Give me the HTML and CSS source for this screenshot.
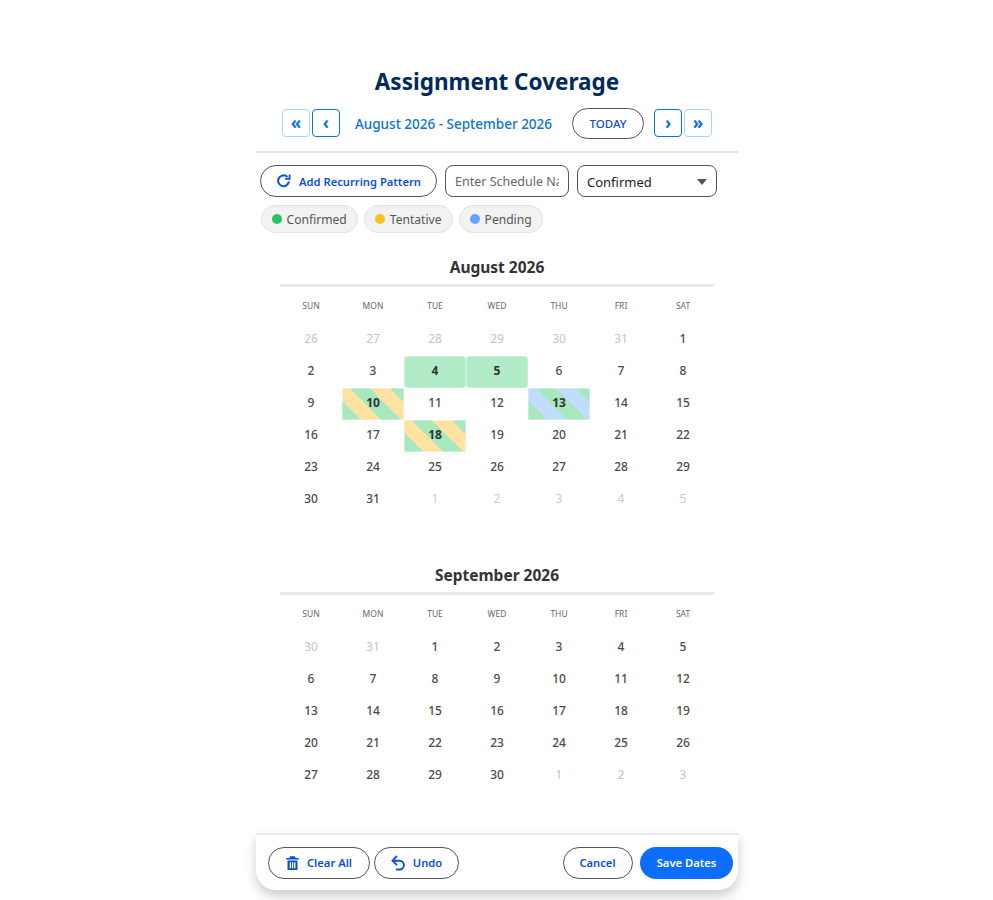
FILE: index.html
```html
<!DOCTYPE html>
<html lang="en">
<head>
<meta charset="utf-8">
<title>Assignment Coverage</title>
<link rel="stylesheet" href="styles.css">
</head>
<body>
<div class="panel">
  <h1 class="title">Assignment Coverage</h1>
  <div class="nav">
    <button class="nav-btn faded">«</button>
    <button class="nav-btn">‹</button>
    <span class="range">August 2026 - September 2026</span>
    <button class="today">TODAY</button>
    <button class="nav-btn">›</button>
    <button class="nav-btn faded">»</button>
  </div>
  <div class="controls">
    <button class="pill recurring">
      <svg class="icon" viewBox="0 0 14 14"><path d="M11.900 7.400A5.400 5.400 0 1 1 10.400 3" fill="none" stroke="currentColor" stroke-width="2"/><path d="M12.600 .5v4.400H8.200" fill="none" stroke="currentColor" stroke-width="1.800"/></svg>
      Add Recurring Pattern
    </button>
    <input class="name-input" type="text" placeholder="Enter Schedule Name">
    <div class="select"><span>Confirmed</span><i class="caret"></i></div>
  </div>
  <div class="legend">
    <span class="chip"><i class="dot green"></i>Confirmed</span>
    <span class="chip"><i class="dot amber"></i>Tentative</span>
    <span class="chip"><i class="dot blue"></i>Pending</span>
  </div>

  <section class="month">
    <h2 class="month-title">August 2026</h2>
    <div class="grid">
      <div class="wd">SUN</div><div class="wd">MON</div><div class="wd">TUE</div><div class="wd">WED</div><div class="wd">THU</div><div class="wd">FRI</div><div class="wd">SAT</div>
      <div class="d off">26</div><div class="d off">27</div><div class="d off">28</div><div class="d off">29</div><div class="d off">30</div><div class="d off">31</div><div class="d">1</div>
      <div class="d">2</div><div class="d">3</div><div class="d sel">4</div><div class="d sel">5</div><div class="d">6</div><div class="d">7</div><div class="d">8</div>
      <div class="d">9</div><div class="d mark tent">10</div><div class="d">11</div><div class="d">12</div><div class="d mark pend">13</div><div class="d">14</div><div class="d">15</div>
      <div class="d">16</div><div class="d">17</div><div class="d mark tent">18</div><div class="d">19</div><div class="d">20</div><div class="d">21</div><div class="d">22</div>
      <div class="d">23</div><div class="d">24</div><div class="d">25</div><div class="d">26</div><div class="d">27</div><div class="d">28</div><div class="d">29</div>
      <div class="d">30</div><div class="d">31</div><div class="d off blueish">1</div><div class="d off blueish">2</div><div class="d off blueish">3</div><div class="d off blueish">4</div><div class="d off blueish">5</div>
    </div>
  </section>

  <section class="month second">
    <h2 class="month-title">September 2026</h2>
    <div class="grid">
      <div class="wd">SUN</div><div class="wd">MON</div><div class="wd">TUE</div><div class="wd">WED</div><div class="wd">THU</div><div class="wd">FRI</div><div class="wd">SAT</div>
      <div class="d off">30</div><div class="d off">31</div><div class="d">1</div><div class="d">2</div><div class="d">3</div><div class="d">4</div><div class="d">5</div>
      <div class="d">6</div><div class="d">7</div><div class="d">8</div><div class="d">9</div><div class="d">10</div><div class="d">11</div><div class="d">12</div>
      <div class="d">13</div><div class="d">14</div><div class="d">15</div><div class="d">16</div><div class="d">17</div><div class="d">18</div><div class="d">19</div>
      <div class="d">20</div><div class="d">21</div><div class="d">22</div><div class="d">23</div><div class="d">24</div><div class="d">25</div><div class="d">26</div>
      <div class="d">27</div><div class="d">28</div><div class="d">29</div><div class="d">30</div><div class="d off">1</div><div class="d off">2</div><div class="d off">3</div>
    </div>
  </section>

  <footer class="footer">
    <div class="foot-group">
      <button class="pill foot clear">
        <svg class="icon trash" viewBox="0 0 13 14"><path d="M4.200 .3h4.600l.8 1.700h3.200v1.500H.2V2h3.200z" fill="currentColor"/><path fill-rule="evenodd" d="M1.500 4.500h10V14h-10zM3.700 6.300v5.900h1.300V6.300zM5.900 6.300v5.900h1.300V6.300zM8.100 6.300v5.900h1.300V6.300z" fill="currentColor"/></svg>
        Clear All
      </button>
      <button class="pill foot undo">
        <svg class="icon undo-icon" viewBox="0 0 14 16"><path d="M2 5.700h6.500a4.400 4.400 0 0 1 0 8.800H5" fill="none" stroke="currentColor" stroke-width="1.900"/><path d="M6 1 1.500 5.700 6 10.200" fill="none" stroke="currentColor" stroke-width="1.900"/></svg>
        Undo
      </button>
    </div>
    <div class="foot-group right">
      <button class="pill foot cancel">Cancel</button>
      <button class="save">Save Dates</button>
    </div>
  </footer>
</div>
</body>
</html>
```
FILE: styles.css
```css
* { box-sizing: border-box; }
html, body { margin: 0; background: #fff; }
body { font-family: "Noto Sans", "Open Sans", sans-serif; color: #333; height: 900px; overflow: hidden; }
button, input { font-family: inherit; }
.panel { width: 482px; margin: 0 auto; padding-top: 64px; position: relative; left: 0.5px; }
.title { margin: 0; height: 36px; line-height: 35px; font-size: 22.500px; font-weight: 700; color: #002a5c; text-align: center; }
.nav { display: flex; align-items: center; justify-content: center; height: 53px; padding-bottom: 5px; border-bottom: 2px solid #e4e4e4; }
.nav-btn { width: 28px; height: 28px; margin: 0 1px; padding: 0 0 1px; background: #fff; border: 1.500px solid #0a74d6; border-radius: 4px; color: #0a74d6; font-size: 17px; font-weight: 700; line-height: 1; }
.nav-btn.faded { border-color: #a9d2f6; }
.range { margin: 1px 20px 0 14px; font-size: 13.500px; font-weight: 500; color: #0a74d6; white-space: nowrap; }
.today { width: 72px; height: 31px; margin-right: 9px; padding: 0; background: #fff; border: 1px solid #555; border-radius: 16px; color: #0b4fd8; font-size: 11.500px; font-weight: 500; }
.controls { display: flex; gap: 8px; padding: 12px 0 0 4px; }
.pill { display: flex; align-items: center; justify-content: center; background: #fff; border: 1px solid #555; border-radius: 16px; color: #0b4fd8; font-size: 11.200px; font-weight: 600; padding: 0; white-space: nowrap; height: 32px; }
.icon { flex: none; }
.recurring { width: 177px; gap: 8px; padding-left: 1px; }
.recurring .icon { width: 14px; height: 14px; }
.name-input { width: 124px; height: 32px; padding: 1px 9px 0; border: 1px solid #555; border-radius: 8px; font-size: 12.500px; background: #fff; color: #333; }
.name-input::placeholder { color: #666; opacity: 1; }
.select { width: 140px; height: 32px; display: flex; align-items: center; justify-content: space-between; padding: 1px 9px 0 9px; border: 1px solid #555; border-radius: 8px; font-size: 13px; color: #222; }
.caret { width: 0; height: 0; margin-top: 1px; border-left: 5.500px solid transparent; border-right: 5.500px solid transparent; border-top: 6px solid #555; }
.legend { display: flex; gap: 6px; padding: 8px 0 0 4.500px; }
.chip { display: flex; align-items: center; gap: 5px; height: 28px; padding: 0 10px; background: #f2f2f3; border: 1px solid #dfe1e6; border-radius: 14px; font-size: 12.100px; color: #555; }
.dot { width: 10px; height: 10px; border-radius: 50%; }
.green { background: #22c55e; }
.amber { background: #fbbf24; }
.blue { background: #60a5fa; }
.month { width: 434px; margin: 20px auto 0; height: 308px; }
.month.second { margin-top: 0; height: 272px; }
.month-title { margin: 0; height: 34px; line-height: 28px; border-bottom: 3px solid #e8e8ec; text-align: center; font-size: 15.500px; font-weight: 700; color: #333; }
.grid { display: grid; grid-template-columns: repeat(7, 62px); grid-template-rows: 37px; grid-auto-rows: 32px; }
.wd { display: flex; align-items: center; justify-content: center; font-size: 8.500px; color: #666; }
.d { display: flex; align-items: center; justify-content: center; padding-bottom: 4px; font-size: 12px; font-weight: 500; color: #4a4a4a; }
.off { color: #c4c4c8; font-weight: 400; }
.blueish { color: #c8cbd8; }
.sel { background: #b2ebc8; font-weight: 700; color: #333; border-radius: 4px; box-shadow: inset 0 0 0 1px rgba(255,255,255,.25); }
.mark { font-weight: 700; color: #333; box-shadow: inset 0 0 0 1px rgba(255,255,255,.35); }
.tent { background: repeating-linear-gradient(45deg, #a7e8bf 0, #a7e8bf 14px, #fde2a2 14px, #fde2a2 28px); }
.pend { background: repeating-linear-gradient(45deg, #a7e8bf 0, #a7e8bf 14px, #c2dcfd 14px, #c2dcfd 28px); }
.footer { display: flex; justify-content: space-between; align-items: center; height: 57px; padding: 0 5px 0 12px; background: #fff; border-top: 2px solid #e8e8e8; border-radius: 0 0 20px 20px; box-shadow: 0 6px 12px rgba(0,0,0,.2); }
.foot-group { display: flex; gap: 4px; }
.foot-group.right { gap: 7.500px; }
.foot { gap: 8px; }
.clear { width: 102px; }
.undo { width: 85px; }
.cancel { width: 70px; }
.trash { width: 13px; height: 14px; }
.undo-icon { width: 14px; height: 16px; }
.save { width: 93px; height: 32px; padding: 0; border: 0; border-radius: 16px; background: #0d6efd; color: #fff; font-size: 11.200px; font-weight: 600; }
```
